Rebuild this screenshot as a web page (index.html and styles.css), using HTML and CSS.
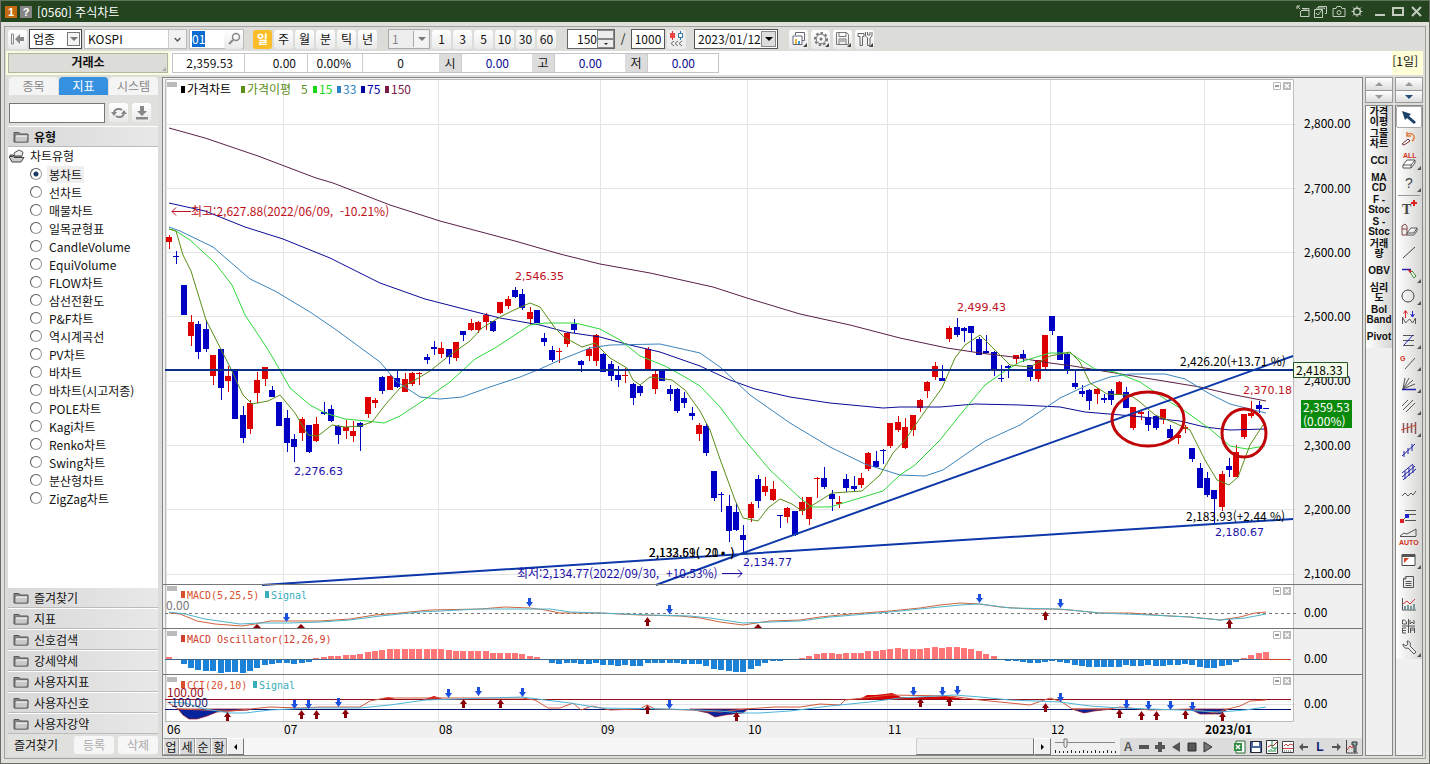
FILE: index.html
```html
<!DOCTYPE html>
<html lang="ko">
<head>
<meta charset="utf-8">
<title>[0560] 주식차트</title>
<link rel="stylesheet" href="styles.css">
</head>
<body>
<svg class="defs" aria-hidden="true">
  <symbol id="folder" viewBox="0 0 16 13"><path d="M1 2.500h5l1 1.500h8v8H1z" fill="#8a8a8a" stroke="#555"/><path d="M2 5h13l-1 7H2z" fill="#c9c9c9" stroke="#666" stroke-width=".8"/><path d="M3 6h11" stroke="#fff"/></symbol>
  <symbol id="folder-open" viewBox="0 0 16 14"><path d="M5 4l5-3 4 2-1 4-7 2z" fill="#eee" stroke="#555"/><path d="M1 6h3l1 1h7v5H3z" fill="#999" stroke="#444"/><path d="M0 7.500h4l1 1h10L12 13H3z" fill="#ccc" stroke="#444"/></symbol>
  <symbol id="panel-min" viewBox="0 0 8 8"><path d="M.5.5h7v7h-7z" fill="#fff" stroke="#b8b8b8"/><path d="M2 4.500h4M2 3.500h4" stroke="#999"/></symbol>
  <symbol id="panel-close" viewBox="0 0 8 8"><path d="M0 0h8v8H0z" fill="#b8b8b8"/><path d="M2 2l4 4M6 2L2 6" stroke="#fff" stroke-width="1.300"/></symbol>
  <symbol id="down" viewBox="0 0 7 9"><path d="M2 0h3v4h2L3.500 9 0 4h2z" fill="#1b50df"/></symbol>
  <symbol id="up" viewBox="0 0 7 9"><path d="M2 9h3V5h2L3.500 0 0 5h2z" fill="#8b0008"/></symbol>
</svg>

<div class="window">
  <header class="titlebar">
    <span class="badge orange">1</span><span class="badge gray">?</span>
    <h1>[0560] 주식차트</h1>
    <div class="winbtns">
      <button aria-label="팝업"><svg viewBox="0 0 14 13"><path d="M1 1h3M1 1v3M1 1l3 3M6 3.500h7v8H4.500V6M5 5.500h8M8 3v2M10 3v2" /></svg></button>
      <button aria-label="복사"><svg viewBox="0 0 14 13"><path d="M4.500 3V1.500h8v7H11M2.500 3.500V3h8v1M.5 4.500h8v8h-8zM2 8l2 2 4-5"/></svg></button>
      <button aria-label="화면저장"><svg viewBox="0 0 14 13"><path d="M1 3.500h3l1-2h4l1 2h3v8H1z"/><circle cx="7" cy="7.500" r="2"/></svg></button>
      <button aria-label="설정"><svg viewBox="0 0 14 13"><circle cx="7" cy="6.500" r="3.300" stroke-width="1.500"/><path d="M7 1v2M7 10v2M1.500 6.500h2M10.500 6.500h2M3 2.500l1.500 1.500M9.500 9l1.500 1.500M11 2.500L9.500 4M4.500 9L3 10.500"/></svg></button>
      <button class="big" aria-label="최소화"><svg viewBox="0 0 14 13"><path d="M2 10h10" stroke-width="2"/></svg></button>
      <button aria-label="최대화"><svg viewBox="0 0 14 13"><path d="M2 3h10v7H2z" stroke-width="2"/></svg></button>
      <button aria-label="닫기"><svg viewBox="0 0 14 13"><path d="M3 2l9 9M12 2l-9 9" stroke-width="2"/></svg></button>
    </div>
  </header>

  <main class="panel">
    <div class="toolbar">
      <button class="tb" aria-label="처음으로"><svg viewBox="0 0 18 18"><path d="M2.500 4v10h2V4z" fill="none" stroke="#888"/><path d="M6 9l5-5v3h4v4h-4v3z" fill="#888"/></svg></button>
      <span class="drop kind"><select aria-label="구분"><option>업종</option></select><i class="arrow boxed"></i></span>
      <span class="drop item"><select aria-label="종목"><option>KOSPI</option></select><svg class="chev" viewBox="0 0 18 18"><path d="M6 8l3 3 3-3" fill="none" stroke="#555" stroke-width="1.500"/></svg></span>
      <span class="code"><input id="code" type="text" value="01" aria-label="코드"><button class="tb" aria-label="검색"><svg viewBox="0 0 18 18"><circle cx="11" cy="7" r="3.500" fill="none" stroke="#888" stroke-width="1.500"/><path d="M8 10l-4 4" stroke="#888" stroke-width="2"/></svg></button></span>
      <div class="set period"><button class="tb on">일</button><button class="tb">주</button><button class="tb">월</button><button class="tb">분</button><button class="tb">틱</button><button class="tb">년</button></div>
      <span class="drop minute"><select aria-label="분 단위"><option>1</option></select><i class="arrow"></i></span>
      <div class="set"><button class="tb">1</button><button class="tb">3</button><button class="tb">5</button><button class="tb">10</button><button class="tb">30</button><button class="tb">60</button></div>
      <span class="spin"><input type="text" value="150" aria-label="표시 개수"><span><button aria-label="증가"><i class="tri up"></i></button><button aria-label="감소"><i class="tri"></i></button></span></span>
      <span class="slash">/</span>
      <input class="total" type="text" value="1000" aria-label="전체 개수">
      <button class="tb flat" aria-label="이전 조회"><svg viewBox="0 0 18 18"><path d="M4.500 1v9" stroke="#d33"/><path d="M2 3h5v5H2z" fill="#e44"/><path d="M12.500 1v9" stroke="#37a"/><path d="M10.500 3.500h4v4h-4z" fill="#fff" stroke="#37a"/><path d="M6 11l-3 2.500L6 16M10 11l-3 2.500 3 2.500M14 11l-3 2.500 3 2.500" fill="none" stroke="#666"/></svg></button>
      <span class="drop date"><select aria-label="날짜"><option>2023/01/12</option></select><i class="arrow dark"></i></span>
      <div class="set icons">
        <button class="tb" aria-label="차트 비교"><svg viewBox="0 0 18 18"><path d="M5.500 5V2.500h9v8H12M3 14.500V6h9v8.500z" fill="#fff" stroke="#667"/><path d="M5 9h2v5H5z" fill="#e8b23a"/><path d="M8 11h2v3H8z" fill="#3a9fd0"/><path d="M17 13v4h-4z" fill="#444"/></svg></button>
        <button class="tb" aria-label="환경설정"><svg viewBox="0 0 18 18"><circle cx="9" cy="9" r="6" fill="none" stroke="#777" stroke-width="2" stroke-dasharray="2.500 2"/><circle cx="9" cy="9" r="4.800" fill="none" stroke="#777"/><circle cx="9" cy="9" r="1.500" fill="#777"/><path d="M17 13v4h-4z" fill="#444"/></svg></button>
        <button class="tb" aria-label="저장"><svg viewBox="0 0 18 18"><path d="M2.500 2.500h10l2 2v10h-12zM5 2.500v4h7v-4M5 14V9h7v5M6 11h5" fill="none" stroke="#777"/><path d="M17 13v4h-4z" fill="#444"/></svg></button>
        <button class="tb" aria-label="도구"><svg viewBox="0 0 18 18"><path d="M2 3.500h6v3H6.500v9H4V6.500H2zM9.500 2v4l2 2v7.500h2.500V8l2-2V2M11.500 2v3h2.500V2" fill="none" stroke="#666"/><path d="M17 13v4h-4z" fill="#444"/></svg></button>
      </div>
    </div>

    <div class="quote">
      <div class="market"><strong>거래소</strong></div>
      <div class="cells">
        <span class="c71">2,359.53</span><span class="c63">0.00</span><span class="c55">0.00%</span><span class="c77">0</span><b>시</b><span class="c71 blue">0.00</span><b>고</b><span class="c71 blue">0.00</span><b>저</b><span class="c71 blue">0.00</span>
      </div>
      <div class="unit">[1일]</div>
    </div>

    <div class="body">
      <aside class="side">
        <nav class="tabs"><button>종목</button><button class="on">지표</button><button>시스템</button></nav>
        <div class="search"><input type="text" aria-label="지표 검색">
          <button class="tb" aria-label="새로고침"><svg viewBox="0 0 18 18"><path d="M4 8a5 4.500 0 0 1 8-2M14 10a5 4.500 0 0 1-8 2" fill="none" stroke="#888" stroke-width="2"/><path d="M1 8h6l-3 4zM17 10h-6l3-4z" fill="#888"/></svg></button>
          <button class="tb" aria-label="내려받기"><svg viewBox="0 0 18 18"><path d="M7 2h4v5h3l-5 5-5-5h3zM3 13h12v2.500H3z" fill="#888"/></svg></button></div>
        <h2 class="bar"><svg><use href="#folder"/></svg>유형</h2>
        <div class="tree">
          <div class="root"><svg><use href="#folder-open"/></svg>차트유형</div>
          <label><input type="radio" name="t" checked><span class="sel">봉차트</span></label>
          <label><input type="radio" name="t"><span>선차트</span></label>
          <label><input type="radio" name="t"><span>매물차트</span></label>
          <label><input type="radio" name="t"><span>일목균형표</span></label>
          <label><input type="radio" name="t"><span>CandleVolume</span></label>
          <label><input type="radio" name="t"><span>EquiVolume</span></label>
          <label><input type="radio" name="t"><span>FLOW차트</span></label>
          <label><input type="radio" name="t"><span>삼선전환도</span></label>
          <label><input type="radio" name="t"><span>P&amp;F차트</span></label>
          <label><input type="radio" name="t"><span>역시계곡선</span></label>
          <label><input type="radio" name="t"><span>PV차트</span></label>
          <label><input type="radio" name="t"><span>바차트</span></label>
          <label><input type="radio" name="t"><span>바차트(시고저종)</span></label>
          <label><input type="radio" name="t"><span>POLE차트</span></label>
          <label><input type="radio" name="t"><span>Kagi차트</span></label>
          <label><input type="radio" name="t"><span>Renko차트</span></label>
          <label><input type="radio" name="t"><span>Swing차트</span></label>
          <label><input type="radio" name="t"><span>분산형차트</span></label>
          <label><input type="radio" name="t"><span>ZigZag차트</span></label>
        </div>
        <button class="bar"><svg><use href="#folder"/></svg>즐겨찾기</button>
        <button class="bar"><svg><use href="#folder"/></svg>지표</button>
        <button class="bar"><svg><use href="#folder"/></svg>신호검색</button>
        <button class="bar"><svg><use href="#folder"/></svg>강세약세</button>
        <button class="bar"><svg><use href="#folder"/></svg>사용자지표</button>
        <button class="bar"><svg><use href="#folder"/></svg>사용자신호</button>
        <button class="bar"><svg><use href="#folder"/></svg>사용자강약</button>
        <div class="fav"><span>즐겨찾기</span><button disabled>등록</button><button disabled>삭제</button></div>
      </aside>

      <section class="chart">
        <svg class="plot" viewBox="163 78 1199 660" role="img" aria-label="KOSPI 일봉 차트">
          <path d="M163 78h1199v660H163z" fill="#f0f0f0"/>
          <path d="M165 80h1128v641H165z" fill="#fff"/>
          <path class="grid" d="M165 124.500h1132M165 188.500h1132M165 252.500h1132M165 316.500h1132M165 381.500h1132M165 445.500h1132M165 509.500h1132M165 574.500h1132M166.500 80v646M283.500 80v646M438.500 80v646M600.500 80v646M747.500 80v646M887.500 80v646M1050.500 80v646M1204.500 80v646M165 704.500h1132"/>
          <path d="M165.500 721V79.500h1128V721.500H165" fill="none" stroke="#bcbcbc"/>
          <g id="osc" shape-rendering="crispEdges"></g>
          <g id="candles" shape-rendering="crispEdges"></g>
          <g class="ma">
            <polyline stroke="#5b1f48" points="169,128 205,138 258,156 316,178 333,183 390,205 440,221 515,241 560,254 600,264 650,273 713,287 747,298 800,314 850,325 900,338 947,348 980,353 1013,357 1050,363 1073,366 1133,376 1200,387 1230,394 1266,401"/>
            <polyline stroke="#0b0b96" points="169,203 205,211 245,227 283,239 330,258 380,283 425,299 460,308 500,318 540,325 566,332 600,337 630,345 660,352 700,366 730,380 755,389 790,397 830,403 883,408 900,407 940,407 975,404 1020,405 1060,407 1085,412 1133,416 1180,421 1205,427 1230,430 1266,429"/>
            <polyline stroke="#3a84bd" points="169,227 180,231 213,247 250,279 275,291 310,312 335,329 380,362 396,381 420,397 440,399 462,397 490,387 520,377 540,369 560,360 590,348 610,345 660,344 700,353 720,367 750,395 790,423 830,447 865,464 900,475 925,476 943,470 985,441 1020,425 1060,398 1090,384 1110,377 1130,374 1165,374 1185,379 1210,394 1230,404 1250,409 1266,413"/>
            <polyline stroke="#2fd83a" points="169,229 176,231 190,240 215,263 232,285 245,315 265,345 273,358 290,388 310,405 325,413 345,419 367,421 384,423 400,416 430,396 450,382 475,359 495,348 530,325 545,323 575,323 600,329 620,340 640,356 665,366 685,377 700,386 720,407 743,438 770,470 800,498 812,507 830,507 850,501 883,491 900,475 915,465 940,440 960,415 985,385 1005,371 1020,362 1050,353 1070,353 1095,369 1115,372 1140,382 1165,399 1185,411 1210,429 1230,446 1247,449 1265,446"/>
            <polyline stroke="#5a8f18" points="169,229 176,231 183,255 191,271 206,320 230,367 243,395 252,404 268,401 280,395 295,413 308,435 318,436 332,425 345,427 360,426 372,422 385,405 400,388 415,380 430,371 450,355 470,341 482,328 500,317 514,310 530,303 540,307 555,328 565,338 573,342 582,347 595,343 610,358 627,368 633,380 640,385 650,377 672,380 685,390 700,411 710,430 720,459 735,500 743,518 758,521 768,508 780,499 792,504 802,511 808,508 832,493 862,491 880,475 893,453 905,440 923,414 942,388 955,358 965,345 980,335 995,350 1010,365 1030,367 1050,356 1070,352 1080,362 1090,383 1107,394 1130,395 1140,402 1155,415 1175,423 1190,430 1205,460 1217,480 1229,485 1238,477 1250,445 1263,425"/>
          </g>
          <path d="M165 370h1128" class="trend dark"/>
          <path d="M656 585L743 553 1293 356M262 585L743 554 1293 519" class="trend"/>
          <ellipse class="mark" cx="1148" cy="419" rx="36" ry="27"/>
          <ellipse class="mark" cx="1244" cy="433" rx="22" ry="24"/>

          <path d="M167 82h10v5h-10zM167 586h10v5h-10zM167 631h10v5h-10zM167 677h10v5h-10z" fill="#bbb"/>
          <path d="M181 86h4v7h-4z"/><text x="187" y="94">가격차트</text>
          <g fill="#5a8f18"><path d="M241 86h4v7h-4z"/><text x="247" y="94">가격이평</text><text x="301" y="94">5</text></g>
          <g fill="#17d817"><path d="M313 86h4v7h-4z"/><text x="319" y="94">15</text></g>
          <g fill="#2c82c4"><path d="M337 86h4v7h-4z"/><text x="343" y="94">33</text></g>
          <g fill="#0000a0"><path d="M361 86h4v7h-4z"/><text x="367" y="94">75</text></g>
          <g fill="#7a1a4a"><path d="M385 86h4v7h-4z"/><text x="391" y="94">150</text></g>

          <g fill="#c01020"><path d="M172 211.500h19M176 207.500l-4 4 4 4" fill="none" stroke="#c01020"/><text x="191" y="216">최고:2,627.88(2022/06/09, &#160;-10.21%)</text>
            <text class="sm" x="515" y="280">2,546.35</text><text class="sm" x="957" y="311">2,499.43</text><text class="sm" x="1243" y="394">2,370.18</text></g>
          <g fill="#1a10a8"><text class="sm" x="294" y="475">2,276.63</text><text class="sm" x="743" y="566">2,134.77</text><text class="sm" x="1215" y="536">2,180.67</text>
            <text x="517" y="578">최저:2,134.77(2022/09/30, &#160;+10.53%)</text><path d="M722 573.500h20M738 569.500l4 4-4 4" fill="none" stroke="#1a10a8"/></g>
          <text x="1180" y="366">2,426.20(+13.71 %)</text>
          <text x="1186" y="521">2,183.93(+2.44 %)</text>
          <text x="649" y="557">2,132.59( &#160;20 • &#160;)</text><text x="649" y="557">2,133.61( &#160;21 • &#160;)</text>

          <path d="M163 584.500h1199M163 628.500h1199M163 674.500h1199" stroke="#777"/>
          <path d="M165 613.500h1132" stroke="#777" stroke-dasharray="3 3"/>
          <g class="ma">
            <polyline stroke="#cf6440" points="169,613 180,614 197,621 215,624 242,626 255,624 270,621 320,621 350,619 375,615 400,613 430,610 480,609 505,607 530,608 545,610 560,613 600,613 640,615 680,616 700,618 720,622 743,625 770,621 800,620 820,617 850,614 890,611 920,608 940,605 960,603 980,604 1000,607 1030,609 1050,609 1070,610 1100,613 1130,613 1170,616 1190,617 1220,620 1240,617 1255,613 1266,612"/>
            <polyline stroke="#4cb4c8" points="169,612 185,614 205,619 240,624 260,623 290,623 320,622 350,620 380,616 420,612 480,609 530,609 550,609 570,612 600,613 650,615 690,616 710,618 743,623 770,622 800,621 830,617 890,612 930,608 960,605 980,604 1010,608 1060,609 1100,613 1150,615 1190,617 1220,620 1245,618 1266,614"/>
          </g>
          <g fill="#d8502c"><path d="M181 591h4v7h-4z"/><text class="mono" x="187" y="599">MACD(5,25,5)</text></g>
          <g fill="#38aebc"><path d="M265 591h4v7h-4z"/><text class="mono" x="271" y="599">Signal</text></g>
          <text x="166" y="610" fill="#777">0.00</text>
          <g fill="#d0402c"><path d="M181 635h4v7h-4z"/><text class="mono" x="187" y="643">MACD Oscillator(12,26,9)</text></g>

          <path d="M165 699.500h1126" stroke="#98101c"/>
          <path d="M165 709.500h1126" stroke="#081870"/>
          <path d="M178 709l5 6 6 4h8l10-3 10-4 12-1 20-1v-1zM690 709l18 4 7 4 10-2 8-1 10-1 5-4zM1072 709l12 4 10-2 18-2zM1190 709l10 5h20l8-5z" fill="#08249c" stroke="#981020" stroke-width=".700"/>
          <path d="M860 699l7-4h8l10-1 7-1 9 4 20 0 25-1 18 3zM380 699l9-2 6 2M425 699l9-3 9 3" fill="#d80000"/>
          <g class="ma">
            <polyline stroke="#d0583c" points="169,703 178,709 230,711 250,709 270,707 300,708 320,707 360,707 370,701 385,698 430,698 450,698 522,698 535,700 548,708 560,708 573,703 581,710 592,706 610,710 640,709 647,705 655,709 690,710 720,712 745,709 775,707 800,707 820,704 840,705 845,700 890,695 950,696 980,700 1000,702 1030,705 1050,698 1062,702 1072,709 1110,709 1120,707 1150,710 1190,709 1215,713 1228,709 1240,706 1250,701 1266,700"/>
            <polyline stroke="#4cb4d8" points="169,702 185,703 205,709 230,713 245,713 270,710 310,708 360,708 390,705 425,700 522,697 545,700 570,703 600,708 670,709 720,711 743,713 760,713 790,711 830,706 870,702 900,698 955,695 980,697 1010,700 1060,702 1090,706 1120,708 1180,710 1220,712 1245,710 1266,707"/>
          </g>
          <g fill="#d8502c"><path d="M181 681h4v7h-4z"/><text class="mono" x="187" y="689">CCI(20,10)</text></g>
          <g fill="#38aebc"><path d="M253 681h4v7h-4z"/><text class="mono" x="259" y="689">Signal</text></g>
          <text x="167" y="697" fill="#98101c">100.00</text><text x="167" y="707" fill="#202870">-100.00</text>
          <g id="arrows"></g>

          <g id="panel-controls"></g>
          <g class="axis"><text x="1304" y="128">2,800.00</text><text x="1304" y="193">2,700.00</text><text x="1304" y="257">2,600.00</text><text x="1304" y="321">2,500.00</text><text x="1304" y="385">2,400.00</text><text x="1304" y="450">2,300.00</text><text x="1304" y="514">2,200.00</text><text x="1304" y="578">2,100.00</text>
            <text x="1304" y="617">0.00</text><text x="1304" y="663">0.00</text><text x="1304" y="708">0.00</text></g>
          <path d="M1293.500 362.500h54v15h-54z" fill="#f3fbe9" stroke="#245424"/><text x="1296" y="375">2,418.33</text>
          <path d="M1301 400h51v28h-51z" fill="#0a8a0a"/><text x="1303" y="412" fill="#fff">2,359.53</text><text x="1303" y="426" fill="#fff">(0.00%)</text>
          <text x="167" y="734">06</text><text x="284" y="734">07</text><text x="439" y="734">08</text><text x="601" y="734">09</text><text x="748" y="734">10</text><text x="888" y="734">11</text><text x="1051" y="734">12</text><text x="1205" y="734" font-weight="700">2023/01</text>
        </svg>
        <div class="status">
          <div class="tags"><button>업</button><button>세</button><button>순</button><button>황</button></div>
          <button class="scrollbtn" aria-label="왼쪽"><i class="tri left"></i></button>
          <div class="track"><div class="thumb"></div></div>
          <button class="scrollbtn" aria-label="오른쪽"><i class="tri right"></i></button>
          <svg class="ruler" viewBox="0 0 62 16"><path d="M1 4.500h60" stroke="#888"/><path d="M1.500 12v3M5.500 13v2M9.500 13v2M13.500 13v2M17.500 12v3M21.500 13v2M25.500 13v2M29.500 12v3M33.500 13v2M37.500 13v2M41.500 12v3M45.500 13v2M49.500 13v2M53.500 12v3M57.500 13v2M61.500 13v2" stroke="#222"/><path d="M10 1h3v7l-1.500 2L10 8z" fill="#eee" stroke="#777"/></svg>
          <div class="mini">
            <button class="glyph" aria-label="글자">A</button>
            <button aria-label="축소"><svg viewBox="0 0 16 16"><path d="M3 6h10v4H3z" fill="#555"/></svg></button>
            <button aria-label="확대"><svg viewBox="0 0 16 16"><path d="M6 3h4v3h3v4h-3v3H6v-3H3V6h3z" fill="#555"/></svg></button>
            <button aria-label="뒤로"><svg viewBox="0 0 16 16"><path d="M12 3v10L4 8z" fill="#555"/></svg></button>
            <button aria-label="정지"><svg viewBox="0 0 16 16"><path d="M4 4h8v8H4z" fill="#555" stroke="#333"/></svg></button>
            <button aria-label="앞으로"><svg viewBox="0 0 16 16"><path d="M4 3v10l8-5z" fill="#777" stroke="#333"/></svg></button>
            <i></i>
            <button aria-label="엑셀"><svg viewBox="0 0 16 16"><path d="M4 2h9v12H4z" fill="#fff" stroke="#276b34"/><path d="M2 4h8v8H2z" fill="#2e8b40"/><path d="M4 6l4 4M8 6l-4 4" stroke="#fff" stroke-width="1.500"/></svg></button>
            <button aria-label="저장"><svg viewBox="0 0 16 16"><path d="M2.500 2.500h11v11h-11z" fill="#4a68a0" stroke="#223"/><path d="M5 3h6v4H5zM4 9h8v4H4z" fill="#fff"/></svg></button>
            <button aria-label="차트1"><svg viewBox="0 0 16 16"><path d="M2.500 1.500h11v13h-11z" fill="#fff" stroke="#333"/><path d="M4 8l3-2 2 1 4-4" fill="none" stroke="#c22"/><path d="M5 13v-2M7 13v-3M9 13v-2M11 13v-4M8 2v7h5" fill="none" stroke="#284"/></svg></button>
            <button aria-label="차트2"><svg viewBox="0 0 16 16"><path d="M2.500 2.500h11v11h-11z" fill="#fff" stroke="#444"/><path d="M4 7l2-2 2 2 2-2 3 1M3 9.500h10" fill="none" stroke="#c44"/><path d="M4 12h8" stroke="#444" stroke-dasharray="1 1"/></svg></button>
            <button aria-label="이전"><svg viewBox="0 0 16 16"><path d="M3 8l4-4v3h5v2H7v3z" fill="#555"/></svg></button>
            <button class="glyph navy" aria-label="로그">L</button>
            <button aria-label="다음"><svg viewBox="0 0 16 16"><path d="M13 8L9 4v3H4v2h5v3z" fill="#555"/></svg></button>
            <button aria-label="차트 도구"><svg viewBox="0 0 16 16"><path d="M2.500 1v13H14" fill="none" stroke="#444"/><path d="M3 11l3-4 2 2 4-6" fill="none" stroke="#c33"/><path d="M8 3h5v3h-1v7h-2V6H8z" fill="#8aa" stroke="#333"/></svg></button>
          </div>
        </div>
      </section>

      <aside class="rail">
        <div class="updown"><button aria-label="위"><i class="tri up"></i></button><button aria-label="아래"><i class="tri"></i></button></div>
        <div class="strip"><div class="inner"><button>가격<br>이평</button><button>그물<br>차트</button><button>CCI</button><button>MA<br>CD</button><button>F -<br>Stoc</button><button>S -<br>Stoc</button><button>거래<br>량</button><button>OBV</button><button>심리<br>도</button><button>Bol<br>Band</button><button>Pivot</button></div></div>
      </aside>
      <aside class="rail">
        <div class="updown"><button aria-label="위"><i class="tri up"></i></button><button aria-label="아래"><i class="tri navy"></i></button></div>
        <div class="strip"><div class="inner">
          <button class="on" aria-label="선택"><svg viewBox="0 0 22 20"><path d="M4 4l9 3-2 2 7 6-2 2-7-6-2 2z" fill="#1d4068"/></svg></button>
          <button aria-label="되돌리기"><svg viewBox="0 0 22 20"><path d="M9 6a4 4 0 1 1 5 6M9 3v4h4" fill="none" stroke="#e08040" stroke-width="1.500"/><path d="M4 15l6-5 2 2-6 4z" fill="#fff" stroke="#733"/></svg></button>
          <button aria-label="전체 삭제"><svg viewBox="0 0 22 20"><text x="5" y="7" class="t8">ALL</text><path d="M5 14l4-5h8l-4 5zM5 14v3h8v-3M13 17l4-5V9" fill="#fff" stroke="#555"/></svg><i></i></button>
          <button aria-label="도움말"><svg viewBox="0 0 22 20"><text x="7" y="15" class="t14">?</text></svg><i></i></button>
          <hr>
          <button aria-label="텍스트"><svg viewBox="0 0 22 20"><text x="4" y="16" class="t14 serif">T</text><path d="M16 2v6M13 5h6" stroke="#d22" stroke-width="2"/></svg></button>
          <button aria-label="지우개"><svg viewBox="0 0 22 20"><path d="M4 6l3-2 2 2v9H4zM4 9h5" fill="#eee" stroke="#844"/><path d="M9 13l4-5h6l-3 5zM9 13v2h7l3-4V8" fill="#fff" stroke="#555"/></svg></button>
          <button aria-label="추세선"><svg viewBox="0 0 22 20"><path d="M5 16L17 5" stroke="#444"/></svg></button>
          <button aria-label="연필"><svg viewBox="0 0 22 20"><path d="M4 5.500h9" stroke="#22a" stroke-width="1.500"/><path d="M12 8l2-1 4 5-2 2z" fill="#fff" stroke="#383"/><path d="M9 5l5 2-2 2z" fill="#d22"/></svg><i></i></button>
          <button aria-label="원"><svg viewBox="0 0 22 20"><circle cx="10" cy="10" r="6" fill="none" stroke="#444"/></svg><i></i></button>
          <button aria-label="파동"><svg viewBox="0 0 22 20"><path d="M4.500 16V9l3 6 4-4 3 4 3-5v6" fill="none" stroke="#555"/><path d="M7.500 3v7M5.500 5.500l2-3 2 3" stroke="#d22" fill="none"/><path d="M14.500 3v6M12.500 6l2 3 2-3" stroke="#22c" fill="none"/></svg></button>
          <button aria-label="평행선"><svg viewBox="0 0 22 20"><path d="M5 5.500h11M5 10.500h11M5 15.500h11" stroke="#555"/><path d="M6 15l9-10" stroke="#22c"/></svg><i></i></button>
          <button aria-label="각도선"><svg viewBox="0 0 22 20"><text x="2" y="9" class="t8">G</text><path d="M7 17L17 6" stroke="#555"/></svg><i></i></button>
          <button aria-label="부채꼴"><svg viewBox="0 0 22 20"><path d="M5 15L7 4M5 15l6-11M5 15l10-9M5 15l12-5" stroke="#555"/><path d="M4 15.500h14" stroke="#22a" stroke-width="1.500"/></svg><i></i></button>
          <button aria-label="속도선"><svg viewBox="0 0 22 20"><path d="M4 10l6-6M5 14L15 4M8 16l9-9" stroke="#555"/></svg><i></i></button>
          <button aria-label="시간대"><svg viewBox="0 0 22 20"><path d="M5.500 5v10M9.500 5v10M13.500 5v10M17.500 4v12" stroke="#855" stroke-width="1.500"/><path d="M3 12l15-5" stroke="#c43"/></svg><i></i></button>
          <button aria-label="채널"><svg viewBox="0 0 22 20"><path d="M4 16L17 4M6 11v6M10 8v6M14 4v7" stroke="#22a" fill="none"/></svg></button>
          <button aria-label="이중 채널"><svg viewBox="0 0 22 20"><path d="M4 11L15 2M5 18L18 7M4 15L17 4M7 9v8M11 6v8M15 3v8" stroke="#22a"/></svg></button>
          <button aria-label="지그재그"><svg viewBox="0 0 22 20"><path d="M4 12l3-3 3 3 3-3 2 2 3-4" fill="none" stroke="#555"/></svg></button>
          <button aria-label="목표선"><svg viewBox="0 0 22 20"><path d="M7 4.500h11M9 8.500h9M7 14.500h11M4 15l6-6" stroke="#555"/><path d="M2 13h4v4H2z" fill="#d22"/><path d="M7 8h4v4H7z" fill="#22c"/></svg></button>
          <button aria-label="자동 추세"><svg viewBox="0 0 22 20"><path d="M2 8l4-3 3 1 9-5v7M2 8.500h16" fill="none" stroke="#555"/><text x="1" y="17" class="t8">AUTO</text></svg></button>
          <button aria-label="창"><svg viewBox="0 0 22 20"><path d="M4 4.500h13v11H4z" fill="#fff" stroke="#444"/><path d="M4 4h13v3H4z" fill="#555"/><path d="M6 8h5L6 13z" fill="#d42"/></svg><i></i></button>
          <button aria-label="문서"><svg viewBox="0 0 22 20"><path d="M8 4.500h7.500v11h-10V7zM8 4v3H5M7.500 9.500h6M7.500 11.500h6M7.500 13.500h6" fill="none" stroke="#555"/></svg></button>
          <button aria-label="지표 차트"><svg viewBox="0 0 22 20"><path d="M4.500 4v12H18" fill="none" stroke="#555"/><path d="M7 16v-4M10 16v-5M13 16v-4M16 16v-6" stroke="#799" stroke-width="2"/><path d="M5 10l4-3 3 3 5-5" fill="none" stroke="#c33"/></svg></button>
          <button aria-label="주기 전환"><svg viewBox="0 0 22 20"><path d="M10.500 3v14M4 10h13M4.500 4h2l2 2v2h-4zM12 4v4l2-2 2 2V4M8 12H4.500v5H8M4.500 14.500H8M12.500 17v-5h4v5M12.500 14h4" fill="none" stroke="#555"/></svg></button>
          <button aria-label="도구 설정"><svg viewBox="0 0 22 20"><path d="M5 6l3 2 2-2-1-3c3 0 4 2 3 5l6 6-2 2-6-6c-3 1-5-1-5-4z" fill="#eee" stroke="#555"/></svg><i></i></button>
        </div></div>
      </aside>
    </div>
  </main>
</div>
<script src="app.js"></script>
</body>
</html>
```
FILE: styles.css
```css
* { box-sizing: border-box; }
body { margin: 0; font: 12px/16px "Noto Sans CJK KR", "Liberation Sans", sans-serif; color: #111; background: #dcdcd8; }
button, input, select { font: inherit; color: inherit; margin: 0; padding: 0; border: 0; background: none; border-radius: 0; outline: 0; }
button { display: flex; align-items: center; justify-content: center; cursor: pointer; }
svg { display: block; }
.defs { position: absolute; width: 0; height: 0; }
h1, h2 { margin: 0; font-size: 12px; }

.window { min-height: 100vh; display: flex; flex-direction: column; border: 1px solid #6b6b66; border-top: 0; background: #e0e0dc; }
.titlebar { height: 22px; background: #24441f; border-top: 1px solid #5d735a; display: flex; align-items: center; gap: 3px; padding: 0 6px 0 4px; color: #fff; }
.titlebar h1 { font-weight: 400; margin-left: 2px; }
.badge { width: 12px; height: 12px; font: bold 11px/12px "Liberation Sans", sans-serif; text-align: center; }
.orange { background: #c46a10; }
.gray { background: #858585; }
.winbtns { margin-left: auto; display: flex; gap: 4px; }
.winbtns svg { width: 14px; height: 13px; fill: none; stroke: #c3cdbf; }
.winbtns .big { margin-left: 5px; }

.panel { flex: 1; display: flex; flex-direction: column; margin: 4px 3px; border: 1px solid #a0a09c; padding: 0 2px 2px 3px; background: #dcdcd8; }
.toolbar { height: 24px; display: flex; align-items: center; gap: 2px; }
.tb { min-width: 19px; height: 19px; background: linear-gradient(#fff, #e9e9e9); border-radius: 3px; }
.tb svg { width: 18px; height: 18px; }
.tb.on { background: #fbbd27; color: #fff; font-weight: 700; }
.tb.flat { background: #eee; }
.set { display: flex; gap: 2px; }
.set.icons { margin-left: 9px; gap: 3px; }
.period { margin-left: 7px; }
.drop { position: relative; display: flex; height: 20px; background: #fff; border: 1px solid #888; }
.drop select { appearance: none; width: 100%; padding-left: 3px; line-height: 16px; }
.kind { width: 53px; border-color: #444; }
.item { width: 103px; border-color: #bbb; }
.chev { position: absolute; right: 0; top: 0; width: 18px; height: 18px; background: #f2f2f2; border-left: 1px solid #ccc; pointer-events: none; }
.arrow { position: absolute; right: 1px; top: 1px; width: 15px; height: 16px; pointer-events: none; background: #f4f4f4; }
.arrow::after { content: ""; position: absolute; left: 4px; top: 6px; border: 4px solid transparent; border-top-color: #777; border-bottom: 0; }
.arrow.boxed { border: 1px solid #777; width: 13px; height: 14px; top: 2px; }
.arrow.boxed::after { left: 2px; top: 4px; }
.arrow.dark { background: #ddd; border: 1px solid #888; }
.arrow.dark::after { border-top-color: #000; left: 3px; top: 5px; }
.code { display: flex; align-items: center; background: #fff; border: 1px solid #bbb; height: 20px; }
.code input { width: 34px; padding-left: 2px; }
.code ::selection { background: #0a6cd0; color: #fff; }
.minute { width: 42px; margin-left: 9px; color: #888; background: #eee; border-color: #aaa; }
.minute .arrow { border-left: 1px solid #aaa; }
.spin { display: flex; width: 48px; height: 20px; border: 1px solid #666; background: #fff; margin-left: 9px; }
.spin input { width: 29px; text-align: right; }
.spin > span { flex: 1; display: flex; flex-direction: column; }
.spin button { flex: 1; background: #eee; border: 1px solid #888; }
.tri { width: 0; height: 0; border: 4px solid transparent; border-top-color: #999; border-bottom: 0; }
.tri.up { border: 4px solid transparent; border-bottom-color: #999; border-top: 0; }
.tri.navy { border-top-color: #274a78; }
.spin .tri { border-width: 2px; border-top-color: #222; border-bottom: 0; }
.spin .tri.up { border-width: 2px; border-color: transparent transparent #222; border-top: 0; }
.tri.left { border: 3px solid transparent; border-right-color: #000; border-left: 0; }
.tri.right { border: 3px solid transparent; border-left-color: #000; border-right: 0; }
.slash { width: 12px; text-align: center; }
.total { width: 34px; height: 20px; border: 1px solid #555; background: #fff; text-align: center; padding-bottom: 2px; }
.date { width: 84px; margin-left: 6px; border-color: #555; }

.quote { display: flex; align-items: stretch; height: 24px; padding: 2px 0; background: #fff; }
.market { width: 160px; background: #dcdcd8; border: 1px solid #b4b4a4; text-align: center; line-height: 16px; outline: 2px solid #fbfbdd; position: relative; }
.market::after { content: ""; position: absolute; right: 1px; bottom: 1px; border: 2px solid #aaa; border-top-color: transparent; border-left-color: transparent; }
.cells { display: flex; margin-left: 4px; line-height: 18px; border: 1px solid #c4c4c4; }
.cells span { border-left: 1px solid #ccc; text-align: right; padding-right: 11px; }
.cells span:first-child { border-left: 0; }
.cells b { width: 22px; background: #dcdcdc; font-weight: 400; text-align: center; }
.cells .c71 { width: 71px; } .cells .c63 { width: 63px; } .cells .c55 { width: 55px; } .cells .c77 { width: 77px; padding-right: 35px; }
.cells .blue { color: #0a0a90; padding-right: 23px; }
.unit { margin: -2px 0 -2px auto; background: #ffffd8; line-height: 20px; padding-right: 5px; }

.body { flex: 1; display: flex; gap: 2px; padding-top: 2px; }
.side { width: 150px; margin-right: 2px; display: flex; flex-direction: column; background: #e0e0dc; }
.tabs { display: flex; gap: 1px; margin: 0 0 8px 1px; }
.tabs button { flex: 1; height: 18px; background: #f4f4f4; color: #888; border-radius: 4px 4px 0 0; }
.tabs .on { background: #3590e0; color: #fff; }
.search { display: flex; gap: 4px; margin: 0 0 3px 1px; }
.search input { width: 96px; height: 20px; border: 1px solid #777; background: #fff; }
.bar { width: 100%; height: 21px; justify-content: flex-start; display: flex; align-items: center; gap: 5px; padding-left: 5px; background: linear-gradient(90deg, #d8d8d8, #e8e8e8); border-top: 1px solid #fff; border-bottom: 1px solid #bbb; }
.bar svg { width: 16px; height: 13px; }
.tree { flex: 1; background: #fff; padding: 0 0 0 1px; }
.root, .tree label { display: flex; align-items: center; height: 18px; }
.root { gap: 5px; }
.root svg { width: 16px; height: 14px; }
.tree label { padding-left: 21px; gap: 5px; }
.tree label span { padding: 0 2px; line-height: 17px; }
.tree .sel { background: #efefef; }
.tree input { appearance: none; width: 12px; height: 12px; border: 1px solid #555; border-right-color: #999; border-bottom-color: #999; border-radius: 6px; background: #fff; }
.tree input:checked { background: radial-gradient(circle, #1c3c60 2px, #fff 3px); }
.fav { display: flex; align-items: center; gap: 4px; height: 22px; padding-left: 6px; }
.fav span { flex: 1; white-space: nowrap; }
.fav button { width: 40px; height: 18px; background: #f6f6f6; border-radius: 3px; color: #aaa; }

.chart { flex: 1; min-width: 0; border: 1px solid #868686; display: flex; flex-direction: column; background: #f0f0f0; }
.plot { width: 100%; height: auto; font-size: 12px; }
.plot .sm { font: 11px "DejaVu Sans", sans-serif; }
.plot .mono { font: 10px "DejaVu Sans Mono", monospace; }
.grid { stroke: #e4e4e4; fill: none; }
.ma polyline { fill: none; stroke-width: 1; }
.trend { fill: none; stroke: #0c38a8; stroke-width: 2; }
.trend.dark { stroke: #0c2f88; }
.mark { fill: none; stroke: #c00408; stroke-width: 3; }
.status { display: flex; align-items: stretch; height: 17px; }
.tags { display: flex; }
.tags button { width: 16px; border: 1px solid #999; border-left-color: #fff; background: #dcdcdc; }
.scrollbtn { width: 17px; background: #f0f0f0; border: 1px solid #777; border-top-color: #fff; border-left-color: #fff; }
.track { flex: 1; background: #f7f7f7; display: flex; justify-content: flex-end; }
.thumb { width: 15%; background: #f0f0f0; border: 1px solid #777; border-top-color: #ddd; border-left-color: #ccc; }
.ruler { width: 62px; height: 16px; margin: 0 4px 0 3px; }
.mini { display: flex; background: #dcdcdc; padding-right: 2px; }
.mini button, .mini i { width: 16px; }
.mini svg { width: 16px; height: 16px; }
.mini .glyph { font: bold 12px/16px "Liberation Sans", sans-serif; color: #555; }
.mini .navy { color: #102070; }

.rail { width: 28px; display: flex; flex-direction: column; gap: 2px; }
.updown { border: 1px solid #999; }
.updown button { width: 100%; height: 12px; background: linear-gradient(#fff, #ddd); }
.updown button + button { border-top: 1px solid #999; }
.strip { flex: 1; border: 1px solid #888; background: #f0f0f0; }
.inner { background: linear-gradient(90deg, #fff, #d6d6d4); display: flex; flex-direction: column; }
.inner button { position: relative; width: 100%; height: 22px; font: bold 10px/10px "Liberation Sans", "Noto Sans CJK KR", sans-serif; }
.inner svg { width: 22px; height: 20px; }
.inner button.on { background: #fff; border: 1px solid #aaa; border-radius: 2px; }
.inner i { position: absolute; right: 1px; bottom: 2px; border: 2px solid #555; border-top-color: transparent; border-left-color: transparent; }
.inner hr { width: 22px; margin: 1px auto; border: 0; border-top: 1px solid #999; }
.t8 { font: bold 7px "Liberation Sans", sans-serif; fill: #d0321c; }
.t14 { font: 14px "Liberation Sans", sans-serif; fill: #444; }
.t14.serif { font: bold 14px "Liberation Serif", serif; }
```
FILE: app.js
```js
const NS = "http://www.w3.org/2000/svg";
const X0 = 169, STEP = 7.362;

// high, open/close top, open/close bottom, low (chart units); r = up day, b = down day
const candles = `r235,237,242,249 b251,256,257,264 b285,285,315,315 r315,322,336,346 b321,324,352,359 b320,329,349,352 r355,355,376,385 b349,349,388,400 r366,376,381,392 b370,370,419,419
b406,415,438,443 r400,403,429,434 r372,380,393,403 r367,367,379,386 b386,390,397,397 b402,402,426,426 b410,418,443,452 b434,439,447,462 r417,419,433,441 b425,425,452,453
r417,424,441,442 b402,412,414,415 b405,409,421,422 b425,426,435,444 r420,427,431,439 r421,431,436,442 b422,423,427,451 r397,397,414,418 r398,400,403,408 b376,377,391,394
r374,376,390,390 b370,378,387,388 r373,379,392,392 r372,373,384,386 r372,373,374,385 b354,357,360,364 b341,347,349,355 r342,348,354,358 b349,349,357,364 r342,342,358,361
b331,331,335,341 r319,323,330,331 r321,322,330,333 r313,315,322,330 b321,321,331,332 r302,302,313,314 r296,299,306,309 b287,290,297,298 b289,294,308,310 r307,312,319,325
b310,310,323,323 b333,338,342,346 b346,350,360,362 r348,351,352,363 r332,333,344,347 b319,324,330,333 b360,361,365,372 r347,349,356,361 r334,335,361,366 b353,354,372,372
b361,364,376,381 b366,375,380,387 r368,375,376,383 b383,384,398,405 b385,386,393,396 r347,349,370,370 r370,374,389,394 b369,370,381,381 b385,389,394,401 b388,389,411,413
b392,398,403,408 b407,413,416,420 r423,425,434,441 b424,426,453,456 b471,471,498,501 b492,494,495,512 b495,506,531,542 b503,512,530,531 b525,535,540,553 r502,504,518,522
b475,479,501,508 r477,486,492,496 r481,489,500,501 b515,515,516,528 r507,508,517,523 b511,511,535,536 r497,502,511,515 r497,497,519,525 r477,478,479,498 b467,478,487,489
b490,494,499,511 r496,502,504,508 b474,479,488,492 b476,486,489,491 r473,478,485,488 r452,453,469,471 b451,461,467,468 b449,450,451,464 r423,423,446,448 r416,422,430,432
r418,427,448,449 r415,415,430,436 r399,400,408,412 r381,382,391,398 r362,366,377,380 b365,378,381,381 r326,328,339,342 b318,327,335,337 b327,328,331,342 b326,326,333,352
b337,339,355,355 b335,351,353,354 b351,352,371,376 b365,378,379,382 b365,366,368,378 r355,355,359,364 b350,354,358,362 b365,365,377,381 r360,360,379,382 r335,335,367,369
b316,316,331,335 b336,336,360,360 b353,354,371,374 b371,383,387,389 b385,391,394,397 b389,390,401,410 r388,389,394,404 b394,398,400,403 b389,391,400,405 r381,382,395,395
b387,392,408,408 r407,407,428,430 r410,412,414,420 b411,417,425,431 b415,416,428,430 r409,409,419,424 b425,429,438,439 r435,435,438,444 r425,427,429,433 b448,448,459,462
b463,468,488,488 b472,478,495,497 b490,490,499,523 r471,474,507,511 b458,466,470,477 r445,452,477,477 r414,414,437,439 r401,413,416,418 b401,405,409,413 b408,408,409,409`.split(/\s+/);

const osc = [2,0,-4,-8,-10,-11,-11,-13,-12,-12,-13,-11,-8,-5,-4,-3,-3,-4,-3,-2,1,2,3,3,4,4,5,7,8,9,10,10,10,10,10,10,10,10,9,8,8,8,8,8,6,6,6,6,5,3,
  2,0,-3,-4,-3,-3,-4,-4,-3,-5,-5,-6,-5,-6,-6,-3,-3,-3,-3,-3,-4,-4,-4,-6,-9,-10,-11,-12,-12,-9,-6,-3,-1,-1,0,0,1,3,5,6,6,5,6,6,6,8,8,9,10,11,
  10,10,10,11,12,11,12,12,11,10,8,5,3,0,-1,-1,-2,-3,-3,-2,-1,-2,-3,-5,-6,-7,-7,-7,-7,-7,-5,-6,-6,-5,-6,-6,-5,-5,-4,-5,-7,-8,-8,-6,-5,-2,1,4,6,7];

const downs = [[286,613],[529,598],[669,605],[979,594],[1060,599],[294,700],[308,700],[338,698],[448,689],[478,687],[522,688],[669,700],[913,687],[942,687],[957,686],[1060,693],[1126,700],[1148,701],[1170,701],[1192,702]];
const ups = [[647,617],[1045,611],[1229,619],[227,712],[301,710],[316,710],[345,709],[463,699],[500,699],[647,705],[736,712],[920,698],[949,697],[1045,703],[1119,709],[1141,711],[1156,711],[1185,710],[1222,712]];

function add(parent, name, attrs) {
  const el = document.createElementNS(NS, name);
  for (const k in attrs) el.setAttribute(k, attrs[k]);
  parent.appendChild(el);
}
const group = id => document.getElementById(id);

candles.forEach((c, i) => {
  const fill = c[0] === "r" ? "#de0000" : "#0000c4";
  const [h, t, b, l] = c.slice(1).split(",").map(Number);
  const x = Math.round(X0 + i * STEP);
  add(group("candles"), "rect", { x: x, y: h, width: 1, height: Math.max(1, l - h), fill });
  add(group("candles"), "rect", { x: x - 3, y: t, width: 6, height: Math.max(1, b - t), fill });
});

osc.forEach((v, i) => {
  if (!v) return;
  const x = Math.round(X0 + i * STEP) - 3;
  add(group("osc"), "rect", { x, y: v > 0 ? 659 - v : 660, width: 6, height: Math.abs(v), fill: v > 0 ? "#ff7676" : "#1c82d8" });
});
add(group("osc"), "rect", { x: 165, y: 659, width: 1101, height: 1, fill: "#3c6a8c" });
add(group("osc"), "rect", { x: 1260, y: 659, width: 31, height: 1, fill: "#d04030" });

const place = (list, id) => list.forEach(([x, y]) => add(group("arrows"), "use", { href: id, x: x - 3, y, width: 7, height: 9 }));
place(downs, "#down");
place(ups, "#up");
[257, 301, 758].forEach(x => add(group("arrows"), "path", { d: `M${x} 624l4 4h-8z`, fill: "#8b0008" }));

[82, 587, 631, 677].forEach(y => {
  add(group("panel-controls"), "use", { href: "#panel-min", x: 1273, y, width: 8, height: 8 });
  add(group("panel-controls"), "use", { href: "#panel-close", x: 1283, y, width: 8, height: 8 });
});

const code = document.getElementById("code");
code.focus();
code.select();
```
